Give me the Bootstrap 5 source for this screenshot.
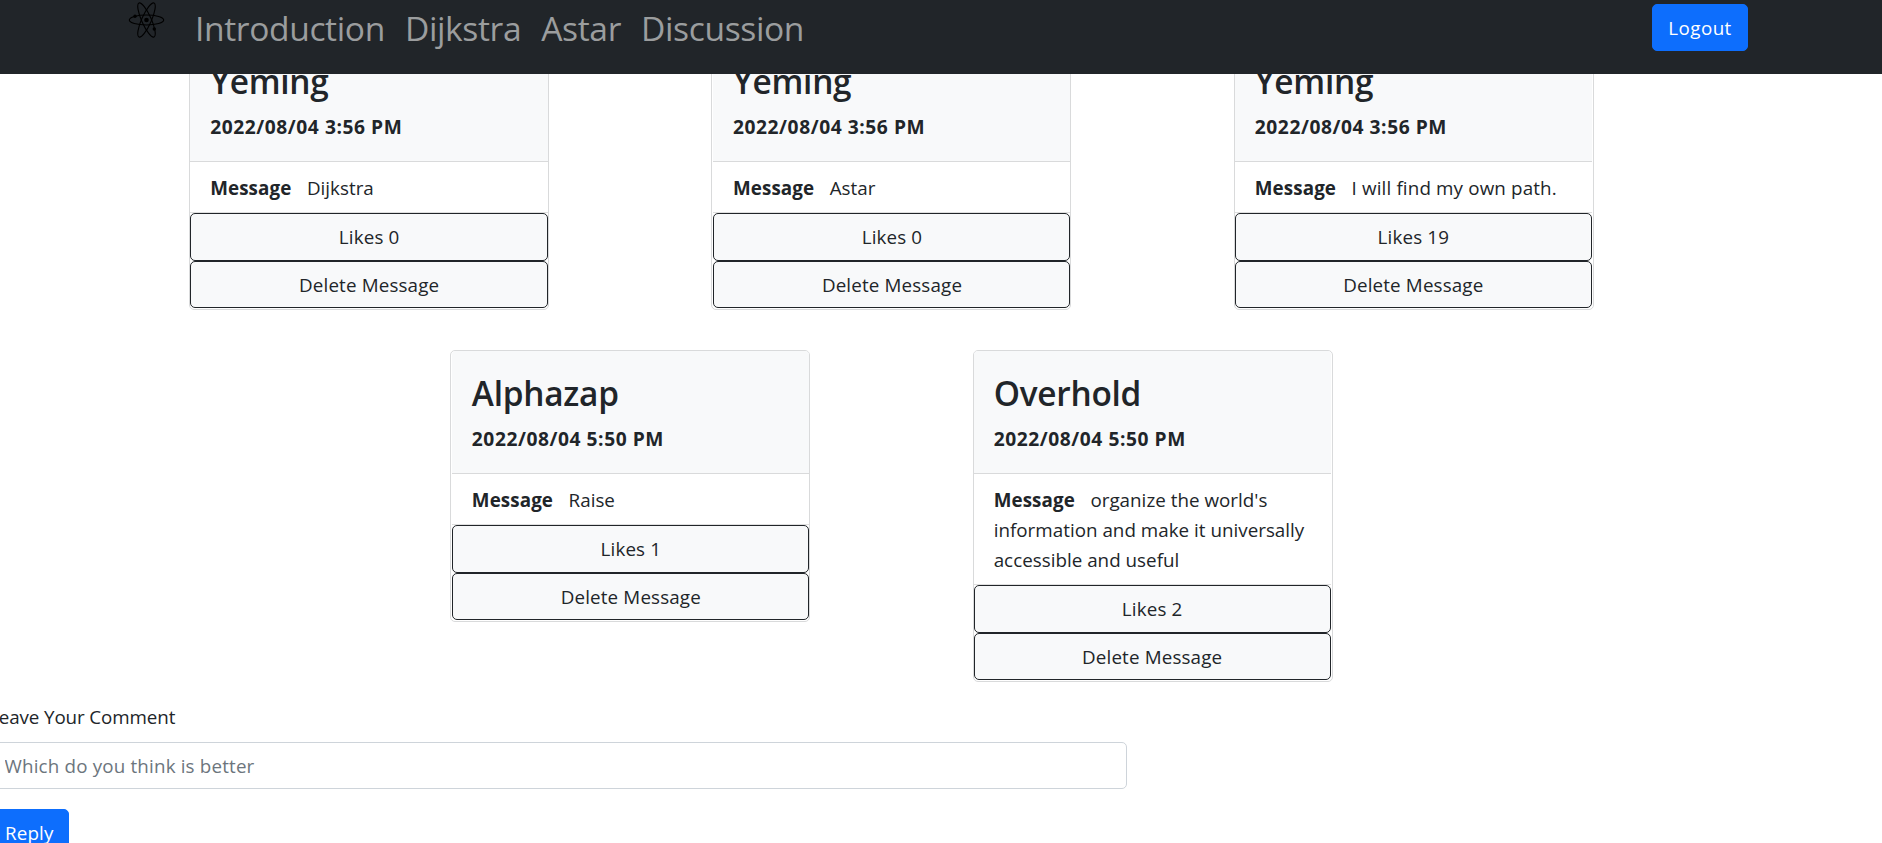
<!DOCTYPE html>
<html lang="en">
<head>
<meta charset="utf-8">
<title>Discussion</title>
<link href="https://cdn.jsdelivr.net/npm/bootstrap@5.3.0/dist/css/bootstrap.min.css" rel="stylesheet">
<style>
html{font-size:20px;overflow:hidden}
body{font-family:"Open Sans","Noto Sans",sans-serif;font-size:18.8px;line-height:30px;letter-spacing:-.1px;height:843px;overflow:hidden;background:#fff;color:#212529}
.topbar{height:74px;background:#212529;padding:0 134px 0 128px}
.brand-mark{width:37px;height:37px;margin:2px 20px 0 0}
.topbar .nav-link{font-size:33.6px;line-height:52px;padding:2px 10px 0;color:#9b9d9e;letter-spacing:-.37px}
.btn{--bs-btn-font-size:18.8px;--bs-btn-line-height:30px;--bs-btn-padding-y:7.5px;--bs-btn-padding-x:15px;--bs-btn-border-radius:5px;line-height:30px;letter-spacing:.15px}
.btn-primary{--bs-btn-bg:#0d6efd;--bs-btn-border-color:#0d6efd}
.logout{margin-top:4px;width:96px;height:47px;padding-left:0;padding-right:0;letter-spacing:.45px}
.reply{width:80px;height:47px}
.board{padding-top:38px;margin-left:108px;width:1567px;row-gap:40px}
.slot{width:522.33px}
.msg-card{width:360px;border:1px solid #d9dadb;border-radius:5px;padding-bottom:1px}
.inset-start{padding-left:1px}
.inset-end{padding-right:1px}
.msg-head{background:#f8f9fa;border-bottom:1px solid #d9dadb;padding:20.5px 20px 19px;height:123px;border-radius:4px 4px 0 0}
.msg-head h3{font-size:33.4px;line-height:42px;font-weight:600;margin-bottom:10px;letter-spacing:-.25px}
.inset-start .msg-head,.inset-start .msg-text{padding-left:19.5px}
.stamp{font-size:19.2px;font-weight:700;letter-spacing:.56px}
.msg-text{padding:10.5px 20px 9.5px;border-bottom:1px solid #dfdfdf;letter-spacing:.02px}
.msg-text b{margin-right:15.5px;letter-spacing:.1px}
.loose{letter-spacing:.15px}
.msg-btn{--bs-btn-bg:#f8f9fa;--bs-btn-color:#212529;--bs-btn-border-color:#212529;height:47px}
.msg-btn:first-of-type{height:48px}
.reply-form{margin:20px 0 0 -11px;width:1138px}
.reply-form .form-control{font-size:18.8px;line-height:30px;height:47px;padding:7.5px 15px 7.5px 14.5px;border-color:#ced4da;border-radius:5px;letter-spacing:.17px}
.form-control::placeholder{color:#6c757d}
</style>
</head>
<body>
<nav class="topbar fixed-top d-flex align-items-start">
  <svg class="brand-mark" viewBox="0 0 37 37" fill="none" stroke="#000" stroke-width="1.1">
    <g><ellipse cx="18.5" cy="18" rx="17.2" ry="5"/><ellipse cx="18.5" cy="18" rx="18.6" ry="4.8" transform="rotate(66 18.5 18)"/><ellipse cx="18.5" cy="18" rx="18.6" ry="4.8" transform="rotate(-66 18.5 18)"/></g>
    <g fill="#000" stroke="none"><circle cx="18.5" cy="18" r="2.3"/><circle cx="7" cy="14.3" r="1.7"/><circle cx="26.3" cy="27" r="1.7"/></g>
  </svg>
  <div class="nav flex-nowrap me-auto">
    <a class="nav-link" href="#">Introduction</a>
    <a class="nav-link" href="#">Dijkstra</a>
    <a class="nav-link" href="#">Astar</a>
    <a class="nav-link" href="#">Discussion</a>
  </div>
  <button class="btn btn-primary logout">Logout</button>
</nav>

<main>
  <div class="board d-flex flex-wrap justify-content-center align-items-start">
    <div class="slot d-flex justify-content-center"><article class="msg-card">
      <div class="msg-head"><h3>Yeming</h3><div class="stamp">2022/08/04 3:56 PM</div></div>
      <div class="msg-text"><b>Message</b>Dijkstra</div>
      <button class="btn msg-btn d-block w-100">Likes 0</button><button class="btn msg-btn d-block w-100">Delete Message</button>
    </article></div>
    <div class="slot d-flex justify-content-center"><article class="msg-card inset-start">
      <div class="msg-head"><h3>Yeming</h3><div class="stamp">2022/08/04 3:56 PM</div></div>
      <div class="msg-text"><b>Message</b>Astar</div>
      <button class="btn msg-btn d-block w-100">Likes 0</button><button class="btn msg-btn d-block w-100">Delete Message</button>
    </article></div>
    <div class="slot d-flex justify-content-center"><article class="msg-card inset-end">
      <div class="msg-head"><h3>Yeming</h3><div class="stamp">2022/08/04 3:56 PM</div></div>
      <div class="msg-text loose"><b>Message</b>I will find my own path.</div>
      <button class="btn msg-btn d-block w-100">Likes 19</button><button class="btn msg-btn d-block w-100">Delete Message</button>
    </article></div>
    <div class="slot d-flex justify-content-center"><article class="msg-card inset-start">
      <div class="msg-head"><h3>Alphazap</h3><div class="stamp">2022/08/04 5:50 PM</div></div>
      <div class="msg-text"><b>Message</b>Raise</div>
      <button class="btn msg-btn d-block w-100">Likes 1</button><button class="btn msg-btn d-block w-100">Delete Message</button>
    </article></div>
    <div class="slot d-flex justify-content-center"><article class="msg-card inset-end">
      <div class="msg-head"><h3>Overhold</h3><div class="stamp">2022/08/04 5:50 PM</div></div>
      <div class="msg-text"><b>Message</b>organize the world's information and make it universally accessible and useful</div>
      <button class="btn msg-btn d-block w-100">Likes 2</button><button class="btn msg-btn d-block w-100">Delete Message</button>
    </article></div>
  </div>
  <form class="reply-form">
    <label class="d-block mb-2" for="comment">Leave Your Comment</label>
    <input id="comment" class="form-control" placeholder="Which do you think is better">
    <button type="button" class="btn btn-primary reply mt-3">Reply</button>
  </form>
</main>
<script src="https://cdn.jsdelivr.net/npm/bootstrap@5.3.0/dist/js/bootstrap.bundle.min.js"></script>
</body>
</html>
